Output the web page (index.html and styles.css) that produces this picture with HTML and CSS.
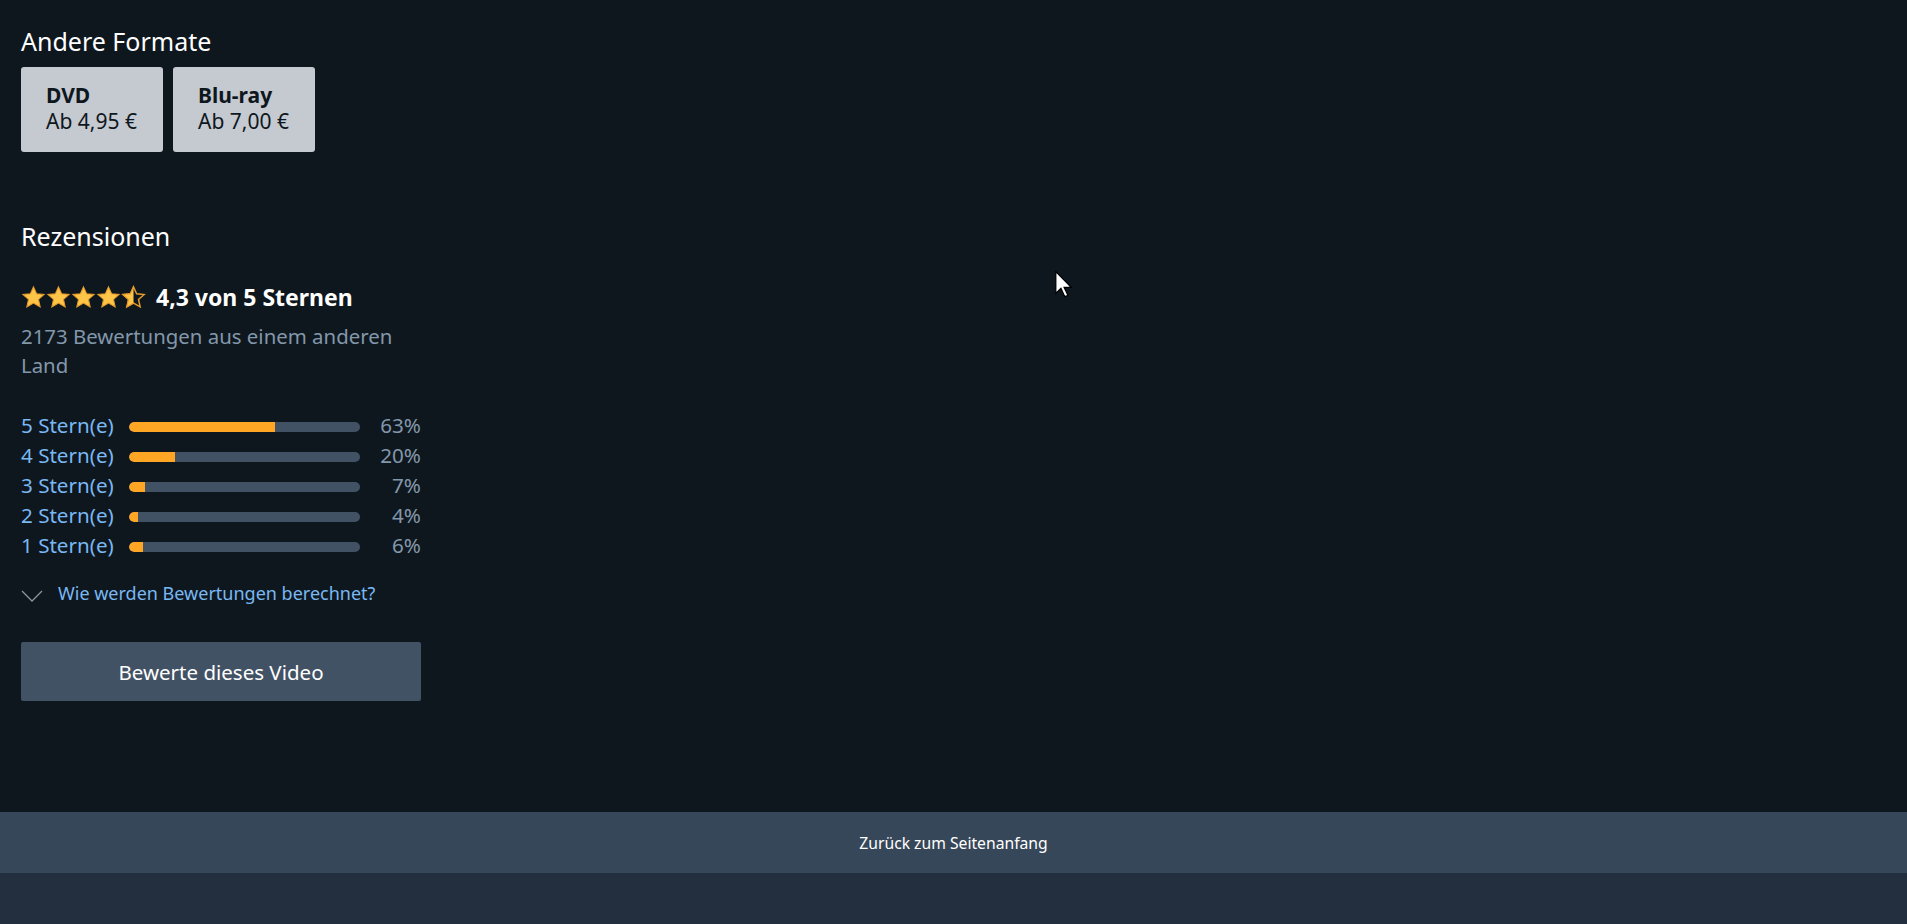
FILE: index.html
```html
<!DOCTYPE html>
<html>
	<head>
		<title>Rezensionen</title>
		<meta charset="utf-8">
		<link rel="stylesheet" href="styles.css">
	</head>
	<body>
		<div id="wrapper">
			<section class="formats">
				<h2>Andere Formate</h2>
				<div class="format-list">
					<a class="format" href="#">
						<b>DVD</b>
						<span>Ab 4,95 €</span>
					</a>
					<a class="format" href="#">
						<b>Blu-ray</b>
						<span>Ab 7,00 €</span>
					</a>
				</div>
			</section>

			<section class="reviews">
				<h2>Rezensionen</h2>
				<div class="rating">
					<div class="stars">
						<svg viewBox="0 0 24 24"><path class="full" d="M12 1.8l3 6.6 7.2.7-5.4 4.8 1.6 7.1-6.4-3.7-6.4 3.7 1.6-7.1L1.8 9.1 9 8.4z"/></svg>
						<svg viewBox="0 0 24 24"><path class="full" d="M12 1.8l3 6.6 7.2.7-5.4 4.8 1.6 7.1-6.4-3.7-6.4 3.7 1.6-7.1L1.8 9.1 9 8.4z"/></svg>
						<svg viewBox="0 0 24 24"><path class="full" d="M12 1.8l3 6.6 7.2.7-5.4 4.8 1.6 7.1-6.4-3.7-6.4 3.7 1.6-7.1L1.8 9.1 9 8.4z"/></svg>
						<svg viewBox="0 0 24 24"><path class="full" d="M12 1.8l3 6.6 7.2.7-5.4 4.8 1.6 7.1-6.4-3.7-6.4 3.7 1.6-7.1L1.8 9.1 9 8.4z"/></svg>
						<svg viewBox="0 0 24 24">
							<defs><clipPath id="half"><rect x="0" y="0" width="12" height="24"/></clipPath></defs>
							<path class="empty" d="M12 1.8l3 6.6 7.2.7-5.4 4.8 1.6 7.1-6.4-3.7-6.4 3.7 1.6-7.1L1.8 9.1 9 8.4z"/>
							<path class="full" clip-path="url(#half)" d="M12 1.8l3 6.6 7.2.7-5.4 4.8 1.6 7.1-6.4-3.7-6.4 3.7 1.6-7.1L1.8 9.1 9 8.4z"/>
						</svg>
					</div>
					<span class="score">4,3 von 5 Sternen</span>
				</div>
				<p class="count">2173 Bewertungen aus einem anderen Land</p>

				<div class="histogram">
					<a href="#">5 Stern(e)</a><div class="bar"><div class="fill" style="width:63%"></div></div><span>63%</span>
					<a href="#">4 Stern(e)</a><div class="bar"><div class="fill" style="width:20%"></div></div><span>20%</span>
					<a href="#">3 Stern(e)</a><div class="bar"><div class="fill" style="width:7%"></div></div><span>7%</span>
					<a href="#">2 Stern(e)</a><div class="bar"><div class="fill" style="width:4%"></div></div><span>4%</span>
					<a href="#">1 Stern(e)</a><div class="bar"><div class="fill" style="width:6%"></div></div><span>6%</span>
				</div>

				<a class="explain" href="#">
					<svg viewBox="0 0 22 13"><path d="M1 1l10 10L21 1"/></svg>
					<span>Wie werden Bewertungen berechnet?</span>
				</a>

				<button>Bewerte dieses Video</button>
			</section>
		</div>

		<footer>
			<a class="to-top" href="#">Zurück zum Seitenanfang</a>
		</footer>
		<div class="bottom"></div>

		<svg class="pointer" viewBox="0 0 13 21"><path d="M.5.5v17l4-4 3 6.5 2.5-1-3-6.3h5.5z"/></svg>
	</body>
</html>
```

FILE: styles.css
```css
html {background-color:#232f3e;}
body {margin:0;background-color:#0f171e;font-family:"Noto Sans",sans-serif;color:#fff;}
a {text-decoration:none;}
#wrapper {padding:25px 21px 111px 21px;width:400px;}
h2 {font-size:25px;font-weight:400;line-height:32px;margin:0;}

.format-list {display:flex;gap:10px;margin-top:10px;}
.format {display:flex;flex-direction:column;width:142px;height:85px;box-sizing:border-box;padding:15px 25px;background-color:#c5c9d0;border-radius:3px;color:#0f171e;font-size:21px;line-height:26px;}
.format b {font-weight:700;}

.reviews {margin-top:68px;}
.rating {display:flex;align-items:center;height:30px;margin-top:30px;}
.stars {display:flex;margin-right:10px;}
.stars svg {width:25px;height:25px;}
.stars .full {fill:#ffc548;stroke:#e39a2b;stroke-width:1;}
.stars .empty {fill:none;stroke:#e39a2b;stroke-width:1.4;}
.score {font-size:23px;font-weight:700;line-height:30px;}
.count {color:#8397ab;font-size:20.4px;line-height:29px;margin:10px 0 0 0;}

.histogram {display:grid;grid-template-columns:108px 231px 1fr;align-items:center;margin-top:30px;font-size:20.6px;line-height:30px;}
.histogram a {color:#79b8f3;}
.histogram span {color:#8397ab;text-align:right;}
.bar {height:10px;margin-top:4px;background-color:#425265;border-radius:5px;overflow:hidden;}
.fill {height:100%;background-color:#ffa724;border-radius:5px 0 0 5px;}

.explain {display:flex;align-items:center;margin-top:21px;color:#79b8f3;font-size:18px;line-height:24px;}
.explain svg {width:22px;height:13px;margin:6px 15px 0 0;fill:none;stroke:#8f959b;stroke-width:1.3;}

button {display:block;width:400px;height:59px;margin-top:37px;border:0;border-radius:2px;background-color:#425265;color:#fff;font-family:"Noto Sans",sans-serif;font-size:20.5px;}
button:hover {cursor:pointer;}

footer {height:61px;background-color:#37475a;display:flex;align-items:center;justify-content:center;}
.to-top {color:#fff;font-size:15.7px;}
.bottom {height:51px;background-color:#232f3e;}

.pointer {position:absolute;left:1055px;top:271px;width:17px;height:27px;fill:#fff;stroke:#000;stroke-width:1;}
```
